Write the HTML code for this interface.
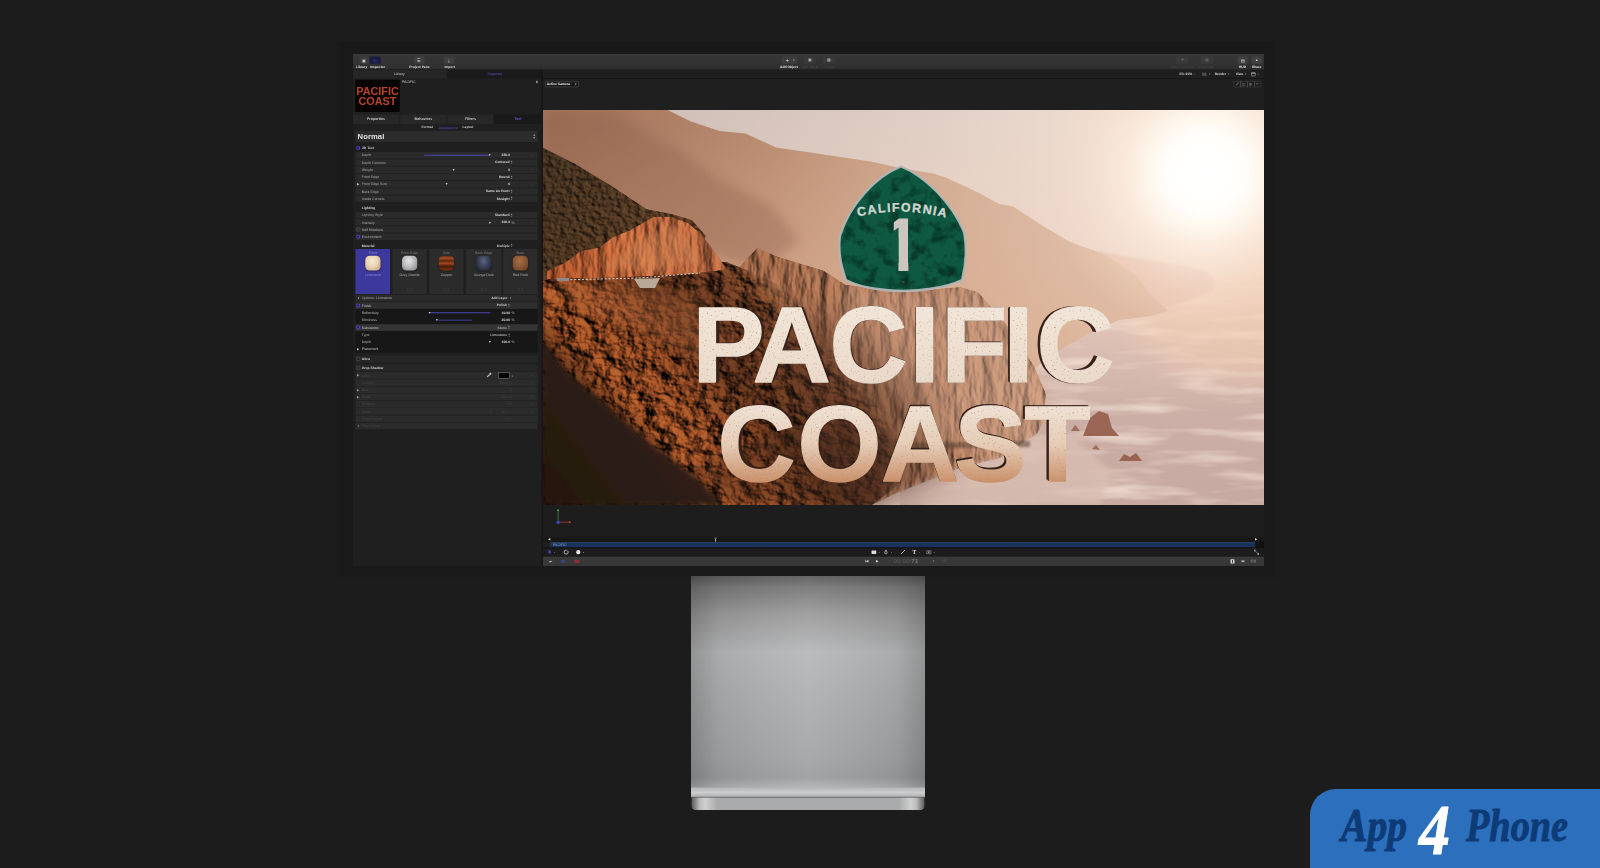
<!DOCTYPE html>
<html lang="en">
<head>
<meta charset="utf-8">
<title>Motion on Pro Display XDR - App 4 Phone</title>
<style>
html,body{margin:0;padding:0;}
body{width:1600px;height:868px;overflow:hidden;background:#1c1c1c;position:relative;font-family:"Liberation Sans",sans-serif;color:#d8d8d8;}
.a{position:absolute;}
#bezelshadow{left:336px;top:41px;width:944px;height:537px;background:#1b1b1b;border-radius:3px;}
#bezel{left:340px;top:42px;width:934px;height:534px;background:#191919;border-radius:3px;}
#screen{left:352.5px;top:53.5px;width:911px;height:512.5px;background:#1f1f1f;overflow:hidden;}
/* screen children are positioned in page coordinates via this wrapper */
#sc{left:-352.5px;top:-53.5px;width:1600px;height:868px;}
#toolbar{left:352px;top:53px;width:912px;height:16.6px;background:#313131;}
#stand{left:691px;top:576px;width:234px;height:234.5px;}
#badge{left:1310px;top:789px;width:290px;height:79px;background:#2b6fbd;border-top-left-radius:26px;}
#badge span{position:absolute;white-space:nowrap;font-family:"Liberation Serif",serif;font-style:italic;font-weight:bold;}
.t[style*="font-weight:bold"]{font-size:13.4px}
.t{font-size:14px;line-height:28.8px;white-space:nowrap;color:#bdbdbd;text-rendering:geometricPrecision;}
.thumb{font-size:43.6px;line-height:44px;font-weight:bold;color:#b9422b;text-align:center;letter-spacing:-0.2px;}
.mat{border-radius:17px;box-shadow:0 3px 6px rgba(0,0,0,0.55);}
.lim{background:radial-gradient(ellipse at 45% 35%,#f6ead2 0%,#ead5b4 45%,#c9a982 85%,#a98a66 100%);}
.gra{background:radial-gradient(ellipse at 45% 35%,#e6e6e8 0%,#bdbdc0 45%,#8c8c90 85%,#66666a 100%);}
.cop{background:linear-gradient(180deg,#6a2c14 0%,#a24c22 18%,#5e2410 34%,#9a4820 52%,#4c1c0c 72%,#7a3416 100%);}
.gru{background:radial-gradient(ellipse at 50% 35%,#5a6482 0%,#3a4258 45%,#20242e 90%);}
.red{background:radial-gradient(ellipse at 45% 35%,#a87048 0%,#8a5634 50%,#5e3820 100%);}
</style>
</head>
<body>
<div class="a" id="bezelshadow"></div>
<div class="a" id="bezel"></div>
<div class="a" id="screen"><div class="a" id="sc">
<div class="a" id="toolbar"></div>
<!--PANEL-START-->
<div class="a" style="left:0;top:0;width:6400px;height:3472px;transform:scale(0.25);transform-origin:0 0">
<div class="a" style="left:1410.00px;top:278.40px;width:756.00px;height:1988.00px;background:#1f1f1f;"></div>
<div class="a" style="left:1410.00px;top:278.40px;width:378.00px;height:35.60px;background:#262626;"></div>
<div class="a" style="left:1788.00px;top:278.40px;width:378.00px;height:35.60px;background:#1a1a1a;"></div>
<div class="a t" style="left:1576.00px;top:282.40px;color:#c8c8c8">Library</div>
<div class="a t" style="left:1950.00px;top:282.40px;color:#5f5bd8">Inspector</div>
<div class="a" style="left:1421.20px;top:319.20px;width:177.60px;height:129.20px;background:#050303;overflow:hidden"><div class="a thumb" style="left:0;top:22.80px;width:177.60px;">PACIFIC</div><div class="a thumb" style="left:0;top:64.40px;width:177.60px;">COAST</div></div>
<div class="a t" style="left:1608.00px;top:313.60px;color:#cfcfcf">PACIFIC</div>
<div class="a" style="left:2145.20px;top:323.20px;width:4.80px;height:9.60px;background:#b0b0b0;border-radius:1.60px"></div>
<div class="a" style="left:1410.00px;top:458.40px;width:185.20px;height:38.00px;background:#272727;"></div>
<div class="a t" style="left:1410.00px;width:188.00px;top:462.80px;text-align:center;color:#c4c4c4;font-weight:bold;font-size:14.68px">Properties</div>
<div class="a" style="left:1600.80px;top:458.40px;width:183.20px;height:38.00px;background:#272727;"></div>
<div class="a t" style="left:1600.80px;width:186.00px;top:462.80px;text-align:center;color:#c4c4c4;font-weight:bold;font-size:14.68px">Behaviors</div>
<div class="a" style="left:1788.80px;top:458.40px;width:183.20px;height:38.00px;background:#272727;"></div>
<div class="a t" style="left:1788.80px;width:186.00px;top:462.80px;text-align:center;color:#c4c4c4;font-weight:bold;font-size:14.68px">Filters</div>
<div class="a" style="left:1976.80px;top:458.40px;width:186.40px;height:38.00px;background:#191919;"></div>
<div class="a t" style="left:1976.80px;width:189.20px;top:462.80px;text-align:center;color:#5a56cf;font-weight:bold;font-size:14.68px">Text</div>
<div class="a t" style="left:1686.00px;top:494.80px;color:#c8c8c8;font-weight:bold">Format</div>
<div class="a t" style="left:1755.20px;top:494.80px;color:#4f4bc0">Appearance</div>
<div class="a t" style="left:1850.00px;top:494.80px;color:#c8c8c8;font-weight:bold">Layout</div>
<div class="a" style="left:1422.00px;top:524.00px;width:728.00px;height:44.00px;background:#2c2c2c;border-radius:3.20px"></div>
<div class="a" style="left:1430.40px;top:526.40px;font-size:30.40px;line-height:40.00px;font-weight:bold;color:#e4e4e4;letter-spacing:0.40px">Normal</div>
<div class="a" style="left:2130.40px;top:532.00px;font-size:13.60px;line-height:12.80px;color:#9a9a9a">&#9650;<br>&#9660;</div>
<div class="a" style="left:1425.60px;top:584.60px;width:14.00px;height:14.00px;background:#4a45c4;border-radius:3.20px"></div>
<div class="a" style="left:1429.20px;top:588.00px;width:6.80px;height:6.80px;background:#1c1a5a;border-radius:1.20px"></div>
<div class="a t" style="left:1448.00px;top:577.20px;color:#d4d4d4;font-weight:bold">3D Text</div>
<div class="a" style="left:1422.00px;top:607.80px;width:728.00px;height:26.00px;background:#2a2a2a;"></div>
<div class="a t" style="left:1447.20px;top:606.40px;color:#a9a9a9">Depth</div>
<div class="a" style="left:1422.00px;top:636.80px;width:728.00px;height:26.00px;background:#2a2a2a;"></div>
<div class="a t" style="left:1447.20px;top:635.40px;color:#a9a9a9">Depth Direction</div>
<div class="a" style="left:1422.00px;top:665.80px;width:728.00px;height:26.00px;background:#2a2a2a;"></div>
<div class="a t" style="left:1447.20px;top:664.40px;color:#a9a9a9">Weight</div>
<div class="a" style="left:1422.00px;top:694.80px;width:728.00px;height:26.00px;background:#2a2a2a;"></div>
<div class="a t" style="left:1447.20px;top:693.40px;color:#a9a9a9">Front Edge</div>
<div class="a" style="left:1422.00px;top:723.80px;width:728.00px;height:26.00px;background:#2a2a2a;"></div>
<div class="a t" style="left:1447.20px;top:722.40px;color:#a9a9a9">Front Edge Size</div>
<div class="a" style="left:1422.00px;top:752.60px;width:728.00px;height:26.00px;background:#2a2a2a;"></div>
<div class="a t" style="left:1447.20px;top:751.20px;color:#a9a9a9">Back Edge</div>
<div class="a" style="left:1422.00px;top:781.60px;width:728.00px;height:26.00px;background:#2a2a2a;"></div>
<div class="a t" style="left:1447.20px;top:780.20px;color:#a9a9a9">Inside Corners</div>
<div class="a" style="left:1696.00px;top:619.00px;width:261.60px;height:3.60px;background:#4b47b8;border-radius:1.60px"></div>
<div class="a" style="left:1952.40px;top:613.20px;font-size:13.20px;line-height:16.00px;color:#c9c9c9">&#9660;</div>
<div class="a t" style="right:4360.00px;top:606.40px;text-align:right;color:#e2e2e2;font-weight:bold">330.0</div>
<div class="a" style="left:2126.00px;top:619.20px;width:6.40px;height:3.20px;background:#3c3c3c;"></div>
<div class="a t" style="right:4362.00px;top:635.40px;text-align:right;color:#dcdcdc;font-weight:bold">Centered</div>
<div class="a" style="left:2041.60px;top:641.60px;font-size:9.60px;line-height:8.00px;color:#9c9c9c">&#9650;<br>&#9660;</div>
<div class="a" style="left:1808.40px;top:671.20px;font-size:13.20px;line-height:16.00px;color:#c9c9c9">&#9660;</div>
<div class="a t" style="right:4360.00px;top:664.40px;text-align:right;color:#e2e2e2;font-weight:bold">0</div>
<div class="a" style="left:2126.00px;top:677.20px;width:6.40px;height:3.20px;background:#3c3c3c;"></div>
<div class="a t" style="right:4362.00px;top:693.40px;text-align:right;color:#dcdcdc;font-weight:bold">Round</div>
<div class="a" style="left:2041.60px;top:699.60px;font-size:9.60px;line-height:8.00px;color:#9c9c9c">&#9650;<br>&#9660;</div>
<div class="a" style="left:1429.20px;top:728.80px;font-size:10.40px;line-height:16.00px;color:#c0c0c0">&#9654;</div>
<div class="a" style="left:1779.60px;top:729.20px;font-size:13.20px;line-height:16.00px;color:#c9c9c9">&#9660;</div>
<div class="a t" style="right:4360.00px;top:722.40px;text-align:right;color:#e2e2e2;font-weight:bold">6</div>
<div class="a" style="left:2126.00px;top:735.20px;width:6.40px;height:3.20px;background:#3c3c3c;"></div>
<div class="a t" style="right:4362.00px;top:751.20px;text-align:right;color:#dcdcdc;font-weight:bold">Same As Front</div>
<div class="a" style="left:2041.60px;top:757.40px;font-size:9.60px;line-height:8.00px;color:#9c9c9c">&#9650;<br>&#9660;</div>
<div class="a t" style="right:4362.00px;top:780.20px;text-align:right;color:#dcdcdc;font-weight:bold">Straight</div>
<div class="a" style="left:2041.60px;top:786.40px;font-size:9.60px;line-height:8.00px;color:#9c9c9c">&#9650;<br>&#9660;</div>
<div class="a t" style="left:1447.20px;top:816.80px;color:#dadada;font-weight:bold">Lighting</div>
<div class="a" style="left:1422.00px;top:846.60px;width:728.00px;height:26.00px;background:#2a2a2a;"></div>
<div class="a t" style="left:1447.20px;top:845.20px;color:#a9a9a9">Lighting Style</div>
<div class="a" style="left:1422.00px;top:876.20px;width:728.00px;height:26.00px;background:#2a2a2a;"></div>
<div class="a t" style="left:1447.20px;top:874.80px;color:#a9a9a9">Intensity</div>
<div class="a t" style="right:4362.00px;top:845.20px;text-align:right;color:#dcdcdc;font-weight:bold">Standard</div>
<div class="a" style="left:2041.60px;top:851.40px;font-size:9.60px;line-height:8.00px;color:#9c9c9c">&#9650;<br>&#9660;</div>
<div class="a" style="left:1953.20px;top:881.60px;font-size:13.20px;line-height:16.00px;color:#c9c9c9">&#9660;</div>
<div class="a t" style="right:4360.00px;top:874.80px;text-align:right;color:#e2e2e2;font-weight:bold">100.0</div>
<div class="a t" style="left:2046.40px;top:874.80px;color:#bcbcbc">%</div>
<div class="a" style="left:2126.00px;top:887.60px;width:6.40px;height:3.20px;background:#3c3c3c;"></div>
<div class="a" style="left:1422.00px;top:905.00px;width:728.00px;height:26.00px;background:#2a2a2a;"></div>
<div class="a" style="left:1425.60px;top:911.00px;width:12.40px;height:12.40px;background:transparent;border:1.40px solid #8a8a8a;border-radius:2.80px"></div>
<div class="a t" style="left:1447.20px;top:903.60px;color:#b4b4b4">Self Shadows</div>
<div class="a" style="left:1422.00px;top:933.80px;width:728.00px;height:26.00px;background:#2a2a2a;"></div>
<div class="a" style="left:1425.60px;top:939.80px;width:14.00px;height:14.00px;background:#4a45c4;border-radius:3.20px"></div>
<div class="a" style="left:1429.20px;top:943.20px;width:6.80px;height:6.80px;background:#1c1a5a;border-radius:1.20px"></div>
<div class="a t" style="left:1447.20px;top:932.40px;color:#b4b4b4">Environment</div>
<div class="a t" style="left:1447.20px;top:968.00px;color:#dadada;font-weight:bold">Material</div>
<div class="a t" style="right:4362.00px;top:968.00px;text-align:right;color:#c8c8c8;font-weight:bold">Multiple</div>
<div class="a" style="left:2041.60px;top:974.20px;font-size:9.60px;line-height:8.00px;color:#9c9c9c">&#9650;<br>&#9660;</div>
<div class="a" style="left:1422.40px;top:996.00px;width:137.60px;height:180.00px;background:#3c389c;"></div>
<div class="a t" style="left:1422.40px;width:137.60px;top:995.20px;text-align:center;color:#8d8ad8">Front</div>
<div class="a mat lim" style="left:1460.80px;top:1023.20px;width:60.80px;height:59.20px"></div>
<div class="a t" style="left:1422.40px;width:137.60px;top:1085.20px;text-align:center;color:#8d8ad8">Limestone</div>
<div class="a" style="left:1569.60px;top:996.00px;width:137.60px;height:180.00px;background:#2b2b2b;"></div>
<div class="a t" style="left:1569.60px;width:137.60px;top:995.20px;text-align:center;color:#7c7c7c">Front Edge</div>
<div class="a mat gra" style="left:1608.00px;top:1023.20px;width:60.80px;height:59.20px"></div>
<div class="a t" style="left:1569.60px;width:137.60px;top:1085.20px;text-align:center;color:#b0b0b0">Grey Granite</div>
<div class="a" style="left:1628.00px;top:1154.40px;width:6.40px;height:7.20px;background:#383838;"></div>
<div class="a" style="left:1642.40px;top:1154.40px;width:6.40px;height:7.20px;background:#383838;"></div>
<div class="a" style="left:1716.80px;top:996.00px;width:137.60px;height:180.00px;background:#2b2b2b;"></div>
<div class="a t" style="left:1716.80px;width:137.60px;top:995.20px;text-align:center;color:#7c7c7c">Side</div>
<div class="a mat cop" style="left:1755.20px;top:1023.20px;width:60.80px;height:59.20px"></div>
<div class="a t" style="left:1716.80px;width:137.60px;top:1085.20px;text-align:center;color:#b0b0b0">Copper</div>
<div class="a" style="left:1775.20px;top:1154.40px;width:6.40px;height:7.20px;background:#383838;"></div>
<div class="a" style="left:1789.60px;top:1154.40px;width:6.40px;height:7.20px;background:#383838;"></div>
<div class="a" style="left:1864.00px;top:996.00px;width:141.60px;height:180.00px;background:#2b2b2b;"></div>
<div class="a t" style="left:1864.00px;width:141.60px;top:995.20px;text-align:center;color:#7c7c7c">Back Edge</div>
<div class="a mat gru" style="left:1904.40px;top:1023.20px;width:60.80px;height:59.20px"></div>
<div class="a t" style="left:1864.00px;width:141.60px;top:1085.20px;text-align:center;color:#b0b0b0">Grunge Dark</div>
<div class="a" style="left:1924.40px;top:1154.40px;width:6.40px;height:7.20px;background:#383838;"></div>
<div class="a" style="left:1938.80px;top:1154.40px;width:6.40px;height:7.20px;background:#383838;"></div>
<div class="a" style="left:2013.20px;top:996.00px;width:137.20px;height:180.00px;background:#2b2b2b;"></div>
<div class="a t" style="left:2013.20px;width:137.20px;top:995.20px;text-align:center;color:#7c7c7c">Back</div>
<div class="a mat red" style="left:2051.40px;top:1023.20px;width:60.80px;height:59.20px"></div>
<div class="a t" style="left:2013.20px;width:137.20px;top:1085.20px;text-align:center;color:#b0b0b0">Red Rock</div>
<div class="a" style="left:2071.40px;top:1154.40px;width:6.40px;height:7.20px;background:#383838;"></div>
<div class="a" style="left:2085.80px;top:1154.40px;width:6.40px;height:7.20px;background:#383838;"></div>
<div class="a" style="left:1422.00px;top:1179.00px;width:728.00px;height:26.00px;background:#2a2a2a;"></div>
<div class="a" style="left:1428.80px;top:1184.00px;font-size:10.40px;line-height:16.00px;color:#c0c0c0">&#9660;</div>
<div class="a t" style="left:1447.20px;top:1177.60px;color:#a9a9a9">Options: Limestone</div>
<div class="a t" style="right:4370.00px;top:1177.60px;text-align:right;color:#cfcfcf;font-weight:bold">Add Layer</div>
<div class="a" style="left:2036.80px;top:1186.40px;font-size:10.40px;line-height:12.00px;color:#9c9c9c">&#9660;</div>
<div class="a" style="left:1422.00px;top:1208.60px;width:728.00px;height:26.00px;background:#2f2f2f;"></div>
<div class="a" style="left:1425.60px;top:1214.60px;width:14.00px;height:14.00px;background:#4a45c4;border-radius:3.20px"></div>
<div class="a" style="left:1429.20px;top:1218.00px;width:6.80px;height:6.80px;background:#1c1a5a;border-radius:1.20px"></div>
<div class="a t" style="left:1447.20px;top:1207.20px;color:#c4c4c4">Finish</div>
<div class="a t" style="right:4372.80px;top:1207.20px;text-align:right;color:#c8c8c8;font-weight:bold">Polish</div>
<div class="a" style="left:2030.80px;top:1213.40px;font-size:9.60px;line-height:8.00px;color:#9c9c9c">&#9650;<br>&#9660;</div>
<div class="a" style="left:1422.00px;top:1236.40px;width:728.00px;height:58.40px;background:#171717;"></div>
<div class="a t" style="left:1447.20px;top:1236.80px;color:#b8b8b8">Reflectivity</div>
<div class="a" style="left:1720.00px;top:1249.40px;width:242.00px;height:3.60px;background:#4b47b8;border-radius:1.60px"></div>
<div class="a" style="left:1712.40px;top:1243.60px;font-size:13.20px;line-height:16.00px;color:#c9c9c9">&#9660;</div>
<div class="a t" style="right:4360.00px;top:1236.80px;text-align:right;color:#e2e2e2;font-weight:bold">10.00</div>
<div class="a t" style="left:2046.40px;top:1236.80px;color:#bcbcbc">%</div>
<div class="a t" style="left:1447.20px;top:1266.00px;color:#b8b8b8">Shininess</div>
<div class="a" style="left:1750.00px;top:1278.60px;width:139.20px;height:3.60px;background:#4b47b8;border-radius:1.60px"></div>
<div class="a" style="left:1741.20px;top:1272.80px;font-size:13.20px;line-height:16.00px;color:#c9c9c9">&#9660;</div>
<div class="a t" style="right:4360.00px;top:1266.00px;text-align:right;color:#e2e2e2;font-weight:bold">30.00</div>
<div class="a t" style="left:2046.40px;top:1266.00px;color:#bcbcbc">%</div>
<div class="a" style="left:1422.00px;top:1297.00px;width:728.00px;height:26.00px;background:#343434;"></div>
<div class="a" style="left:1425.60px;top:1303.00px;width:14.00px;height:14.00px;background:#4a45c4;border-radius:3.20px"></div>
<div class="a" style="left:1429.20px;top:1306.40px;width:6.80px;height:6.80px;background:#1c1a5a;border-radius:1.20px"></div>
<div class="a t" style="left:1447.20px;top:1295.60px;color:#c4c4c4">Substance</div>
<div class="a t" style="right:4372.80px;top:1295.60px;text-align:right;color:#a8a8a8;font-weight:bold">Stone</div>
<div class="a" style="left:2030.80px;top:1301.80px;font-size:9.60px;line-height:8.00px;color:#9c9c9c">&#9650;<br>&#9660;</div>
<div class="a" style="left:1422.00px;top:1324.80px;width:728.00px;height:85.60px;background:#171717;"></div>
<div class="a t" style="left:1447.20px;top:1325.20px;color:#b8b8b8">Type</div>
<div class="a t" style="right:4372.00px;top:1325.20px;text-align:right;color:#b4b4b4;font-weight:bold">Limestone</div>
<div class="a" style="left:2031.60px;top:1331.40px;font-size:9.60px;line-height:8.00px;color:#9c9c9c">&#9650;<br>&#9660;</div>
<div class="a t" style="left:1447.20px;top:1354.40px;color:#b8b8b8">Depth</div>
<div class="a" style="left:1953.20px;top:1361.20px;font-size:13.20px;line-height:16.00px;color:#c9c9c9">&#9660;</div>
<div class="a t" style="right:4360.00px;top:1354.40px;text-align:right;color:#e2e2e2;font-weight:bold">100.0</div>
<div class="a t" style="left:2046.40px;top:1354.40px;color:#bcbcbc">%</div>
<div class="a" style="left:1429.20px;top:1388.40px;font-size:10.40px;line-height:16.00px;color:#c0c0c0">&#9654;</div>
<div class="a t" style="left:1447.20px;top:1382.00px;color:#c4c4c4">Placement</div>
<div class="a" style="left:1422.00px;top:1421.60px;width:728.00px;height:28.80px;background:#262626;"></div>
<div class="a" style="left:1425.60px;top:1428.20px;width:12.40px;height:12.40px;background:transparent;border:1.40px solid #8a8a8a;border-radius:2.80px"></div>
<div class="a t" style="left:1447.20px;top:1420.80px;color:#d0d0d0;font-weight:bold">Glow</div>
<div class="a" style="left:1422.00px;top:1457.20px;width:728.00px;height:28.80px;background:#262626;"></div>
<div class="a" style="left:1425.60px;top:1464.20px;width:12.40px;height:12.40px;background:transparent;border:1.40px solid #8a8a8a;border-radius:2.80px"></div>
<div class="a t" style="left:1447.20px;top:1456.80px;color:#d0d0d0;font-weight:bold">Drop Shadow</div>
<div class="a" style="left:1422.00px;top:1488.40px;width:728.00px;height:26.40px;background:#2b2b2b;"></div>
<div class="a" style="left:1429.20px;top:1493.60px;font-size:10.40px;line-height:16.00px;color:#9a9a9a">&#9654;</div>
<div class="a t" style="left:1447.20px;top:1487.20px;color:#474747">Color</div>
<div class="a" style="left:2126.00px;top:1500.00px;width:6.40px;height:3.20px;background:#3c3c3c;"></div>
<div class="a" style="left:1422.00px;top:1517.20px;width:728.00px;height:26.40px;background:#2b2b2b;"></div>
<div class="a t" style="left:1447.20px;top:1516.00px;color:#474747">Opacity</div>
<div class="a" style="left:2126.00px;top:1528.80px;width:6.40px;height:3.20px;background:#3c3c3c;"></div>
<div class="a" style="left:1422.00px;top:1545.60px;width:728.00px;height:26.40px;background:#2b2b2b;"></div>
<div class="a" style="left:1429.20px;top:1550.80px;font-size:10.40px;line-height:16.00px;color:#9a9a9a">&#9654;</div>
<div class="a t" style="left:1447.20px;top:1544.40px;color:#474747">Blur</div>
<div class="a" style="left:2126.00px;top:1557.20px;width:6.40px;height:3.20px;background:#3c3c3c;"></div>
<div class="a" style="left:1422.00px;top:1574.40px;width:728.00px;height:26.40px;background:#2b2b2b;"></div>
<div class="a" style="left:1429.20px;top:1579.60px;font-size:10.40px;line-height:16.00px;color:#9a9a9a">&#9654;</div>
<div class="a t" style="left:1447.20px;top:1573.20px;color:#474747">Scale</div>
<div class="a" style="left:2126.00px;top:1586.00px;width:6.40px;height:3.20px;background:#3c3c3c;"></div>
<div class="a" style="left:1422.00px;top:1603.20px;width:728.00px;height:26.40px;background:#2b2b2b;"></div>
<div class="a t" style="left:1447.20px;top:1602.00px;color:#474747">Distance</div>
<div class="a" style="left:2126.00px;top:1614.80px;width:6.40px;height:3.20px;background:#3c3c3c;"></div>
<div class="a" style="left:1422.00px;top:1632.40px;width:728.00px;height:26.40px;background:#2b2b2b;"></div>
<div class="a t" style="left:1447.20px;top:1631.20px;color:#474747">Angle</div>
<div class="a" style="left:2126.00px;top:1644.00px;width:6.40px;height:3.20px;background:#3c3c3c;"></div>
<div class="a" style="left:1422.00px;top:1661.60px;width:728.00px;height:26.40px;background:#2b2b2b;"></div>
<div class="a t" style="left:1447.20px;top:1660.40px;color:#474747">Fixed Source</div>
<div class="a" style="left:1422.00px;top:1690.80px;width:728.00px;height:26.40px;background:#2b2b2b;"></div>
<div class="a" style="left:1428.80px;top:1696.00px;font-size:10.40px;line-height:16.00px;color:#9a9a9a">&#9660;</div>
<div class="a t" style="left:1447.20px;top:1689.60px;color:#474747">Four Corner</div>
<div class="a t" style="right:4352.00px;top:1516.00px;text-align:right;color:#444">100.0 %</div>
<div class="a t" style="right:4352.00px;top:1544.40px;text-align:right;color:#444">0</div>
<div class="a t" style="right:4352.00px;top:1573.20px;text-align:right;color:#444">100 %</div>
<div class="a t" style="right:4352.00px;top:1602.00px;text-align:right;color:#444">5.0</div>
<div class="a t" style="right:4352.00px;top:1631.20px;text-align:right;color:#444">315.0 &deg;</div>
<div class="a" style="left:1992.40px;top:1489.20px;width:46.40px;height:24.80px;background:#050505;border:2.00px solid #9a9a9a;box-sizing:border-box"></div>
<div class="a" style="left:2044.00px;top:1496.80px;font-size:9.60px;line-height:12.00px;color:#aaa">&#9660;</div>
<svg class="a" style="left:1945.20px;top:1490.40px" width="21.60" height="21.60" viewBox="0 0 10 10"><path d="M1 9 L1.6 7 L6 2.6 L7.4 4 L3 8.4 Z" fill="#c8c8c8"/><path d="M5.6 1.8 L7 0.6 Q8.4 0 9.2 0.8 Q10 1.6 9.4 3 L8.2 4.4 Z" fill="#e0e0e0"/></svg>
<div class="a" style="left:1955.60px;top:1639.20px;width:12.80px;height:12.80px;background:transparent;border:1.60px solid #5a5a5a;border-radius:50%;box-sizing:border-box"></div>
<div class="a" style="left:2028.00px;top:1668.80px;width:11.20px;height:11.20px;background:transparent;border:1.40px solid #444;border-radius:2.40px;box-sizing:border-box"></div>
<div class="a" style="left:2165.60px;top:278.40px;width:6.40px;height:1988.00px;background:#161616;"></div>
</div>
<!--PANEL-END-->
<!--CANVAS-START-->
<svg class="a" style="left:543px;top:110px" width="720.5" height="395" viewBox="543 110 720.5 395">
<defs>
<linearGradient id="sky" x1="543" y1="0" x2="1263" y2="0" gradientUnits="userSpaceOnUse">
<stop offset="0" stop-color="#c9b8b1"/>
<stop offset="0.25" stop-color="#d2c3bc"/>
<stop offset="0.55" stop-color="#dfd0c7"/>
<stop offset="0.8" stop-color="#ecdcd1"/>
<stop offset="1" stop-color="#efd9cf"/>
</linearGradient>
<linearGradient id="skyv" x1="0" y1="110" x2="0" y2="330" gradientUnits="userSpaceOnUse">
<stop offset="0" stop-color="#f0d2bf" stop-opacity="0"/>
<stop offset="1" stop-color="#efd0be" stop-opacity="0.7"/>
</linearGradient>
<radialGradient id="sun" cx="1205" cy="173" r="160" gradientUnits="userSpaceOnUse">
<stop offset="0" stop-color="#ffffff" stop-opacity="1"/>
<stop offset="0.24" stop-color="#fffefb" stop-opacity="1"/>
<stop offset="0.36" stop-color="#fff8ee" stop-opacity="0.92"/>
<stop offset="0.52" stop-color="#fdeee0" stop-opacity="0.66"/>
<stop offset="0.75" stop-color="#f9e4d4" stop-opacity="0.28"/>
<stop offset="1" stop-color="#f6dccb" stop-opacity="0"/>
</radialGradient>
<radialGradient id="haze" cx="1206" cy="172" r="620" gradientUnits="userSpaceOnUse">
<stop offset="0" stop-color="#ffeee0" stop-opacity="0.4"/>
<stop offset="0.35" stop-color="#f2d8c8" stop-opacity="0.17"/>
<stop offset="0.7" stop-color="#e6bca4" stop-opacity="0.05"/>
<stop offset="1" stop-color="#e0a888" stop-opacity="0"/>
</radialGradient>
<linearGradient id="sea" x1="0" y1="280" x2="0" y2="505" gradientUnits="userSpaceOnUse">
<stop offset="0" stop-color="#ebcfbf"/>
<stop offset="0.25" stop-color="#d8bbaf"/>
<stop offset="0.6" stop-color="#c5a8a1"/>
<stop offset="1" stop-color="#c2a6a0"/>
</linearGradient>
<linearGradient id="farmt" x1="560" y1="110" x2="1160" y2="300" gradientUnits="userSpaceOnUse">
<stop offset="0" stop-color="#a3735b"/>
<stop offset="0.3" stop-color="#b5876c"/>
<stop offset="0.6" stop-color="#cda68c"/>
<stop offset="1" stop-color="#e0bca6"/>
</linearGradient>
<linearGradient id="farmtv" x1="0" y1="130" x2="0" y2="300" gradientUnits="userSpaceOnUse">
<stop offset="0" stop-color="#d6aa8c" stop-opacity="0"/>
<stop offset="1" stop-color="#d6aa8c" stop-opacity="0.6"/>
</linearGradient>
<linearGradient id="mid" x1="740" y1="250" x2="1040" y2="440" gradientUnits="userSpaceOnUse">
<stop offset="0" stop-color="#a06a4c"/>
<stop offset="0.45" stop-color="#a57458"/>
<stop offset="1" stop-color="#b58a70"/>
</linearGradient>
<linearGradient id="near" x1="590" y1="480" x2="800" y2="290" gradientUnits="userSpaceOnUse">
<stop offset="0" stop-color="#2c1b11"/>
<stop offset="0.16" stop-color="#4a2a18"/>
<stop offset="0.3" stop-color="#a05a30"/>
<stop offset="0.46" stop-color="#94522c"/>
<stop offset="0.62" stop-color="#5c341e"/>
<stop offset="0.82" stop-color="#6a3e26"/>
<stop offset="1" stop-color="#8a5a3c"/>
</linearGradient>
<linearGradient id="veg" x1="543" y1="150" x2="700" y2="280" gradientUnits="userSpaceOnUse">
<stop offset="0" stop-color="#4b3a28"/>
<stop offset="0.55" stop-color="#58402a"/>
<stop offset="1" stop-color="#6e452a"/>
</linearGradient>
<linearGradient id="cut" x1="560" y1="280" x2="690" y2="215" gradientUnits="userSpaceOnUse">
<stop offset="0" stop-color="#ad5a32"/>
<stop offset="0.55" stop-color="#c37044"/>
<stop offset="1" stop-color="#b86c46"/>
</linearGradient>
<linearGradient id="shadow" x1="543" y1="505" x2="690" y2="390" gradientUnits="userSpaceOnUse">
<stop offset="0" stop-color="#24180f"/>
<stop offset="0.7" stop-color="#2e1e14"/>
<stop offset="1" stop-color="#4a2c1a"/>
</linearGradient>
<linearGradient id="txt1" x1="0" y1="306" x2="0" y2="382" gradientUnits="userSpaceOnUse">
<stop offset="0" stop-color="#f1e6da"/>
<stop offset="1" stop-color="#eadaca"/>
</linearGradient>
<linearGradient id="txt2" x1="0" y1="405" x2="0" y2="483" gradientUnits="userSpaceOnUse">
<stop offset="0" stop-color="#efe2d4"/>
<stop offset="0.5" stop-color="#e6cdb8"/>
<stop offset="1" stop-color="#c9906a"/>
</linearGradient>
<filter id="rockf" color-interpolation-filters="sRGB" x="0" y="0" width="100%" height="100%">
<feTurbulence type="fractalNoise" baseFrequency="0.16 0.2" numOctaves="3" seed="9" result="n"/>
<feDiffuseLighting in="n" surfaceScale="2.2" diffuseConstant="1.1" lighting-color="#fff0e0" result="lit"><feDistantLight azimuth="-30" elevation="48"/></feDiffuseLighting>
<feComposite in="lit" in2="SourceGraphic" operator="arithmetic" k1="1.1" k2="0" k3="0" k4="0" result="mul"/>
<feComposite in="mul" in2="SourceGraphic" operator="in"/>
</filter>
<filter id="rock2" color-interpolation-filters="sRGB" x="0" y="0" width="100%" height="100%">
<feTurbulence type="fractalNoise" baseFrequency="0.085 0.028" numOctaves="4" seed="4" result="n"/>
<feDiffuseLighting in="n" surfaceScale="3.2" diffuseConstant="1.12" lighting-color="#fff0e2" result="lit"><feDistantLight azimuth="-10" elevation="50"/></feDiffuseLighting>
<feComposite in="lit" in2="SourceGraphic" operator="arithmetic" k1="1.12" k2="0" k3="0" k4="0" result="mul"/>
<feComposite in="mul" in2="SourceGraphic" operator="in"/>
</filter>
<filter id="rock" color-interpolation-filters="sRGB" x="0" y="0" width="100%" height="100%">
<feTurbulence type="fractalNoise" baseFrequency="0.06 0.085" numOctaves="5" seed="7" result="n"/>
<feDiffuseLighting in="n" surfaceScale="5.5" diffuseConstant="1.22" lighting-color="#ffe2c6" result="lit"><feDistantLight azimuth="-25" elevation="38"/></feDiffuseLighting>
<feComposite in="lit" in2="SourceGraphic" operator="arithmetic" k1="1.15" k2="0" k3="0" k4="0" result="mul"/>
<feComposite in="mul" in2="SourceGraphic" operator="in"/>
</filter>
<filter id="speck" color-interpolation-filters="sRGB" x="0" y="0" width="100%" height="100%">
<feTurbulence type="fractalNoise" baseFrequency="0.55" numOctaves="2" seed="3" result="n"/>
<feColorMatrix in="n" type="matrix" values="0 0 0 0 0.72  0 0 0 0 0.5  0 0 0 0 0.38  3.0 0 0 0 -1.95" result="sp"/>
<feComposite in="sp" in2="SourceGraphic" operator="in" result="spc"/>
<feMerge><feMergeNode in="SourceGraphic"/><feMergeNode in="spc"/></feMerge>
</filter>
<filter id="mottle" color-interpolation-filters="sRGB" x="-5%" y="-5%" width="110%" height="110%">
<feTurbulence type="fractalNoise" baseFrequency="0.09" numOctaves="3" seed="5" result="n"/>
<feColorMatrix in="n" type="matrix" values="0 0 0 0 0.02  0 0 0 0 0.18  0 0 0 0 0.13  2.4 0 0 0 -1.1" result="sp"/>
<feComposite in="sp" in2="SourceGraphic" operator="in" result="spc"/>
<feMerge><feMergeNode in="SourceGraphic"/><feMergeNode in="spc"/></feMerge>
</filter>
<filter id="waves" color-interpolation-filters="sRGB" x="0" y="0" width="100%" height="100%">
<feTurbulence type="fractalNoise" baseFrequency="0.012 0.07" numOctaves="3" seed="11" result="n"/>
<feColorMatrix in="n" type="matrix" values="0 0 0 0 1  0 0 0 0 0.93  0 0 0 0 0.89  1.7 0 0 0 -0.8" result="w"/>
<feComposite in="w" in2="SourceGraphic" operator="in" result="wc"/>
<feMerge><feMergeNode in="SourceGraphic"/><feMergeNode in="wc"/></feMerge>
</filter>
<filter id="b1"><feGaussianBlur stdDeviation="1"/></filter>
<filter id="b2"><feGaussianBlur stdDeviation="2.5"/></filter>
<filter id="b6"><feGaussianBlur stdDeviation="6"/></filter>
<filter id="b14"><feGaussianBlur stdDeviation="14"/></filter>
<clipPath id="oneclip"><path d="M893.8 217 H908.4 V272 H898.4 V238 H893.8 Z"/></clipPath>
<filter id="b9" x="-20%" y="-20%" width="140%" height="140%"><feGaussianBlur stdDeviation="9"/></filter>
<mask id="nearmask" maskUnits="userSpaceOnUse" x="543" y="110" width="721" height="395"><path d="M480 230 L600 240 L727 256 L742 266 L772 292 L815 335 L865 395 L895 445 L895 482 L860 560 L480 560 Z" fill="#fff" filter="url(#b9)"/><path d="M480 262 L727 262 L742 268 L760 285 L700 330 L480 330 Z" fill="#fff"/></mask>
<path id="arc" d="M853 218 Q902 204.4 952 219.6"/>
</defs>
<!-- sky -->
<rect x="543" y="110" width="721" height="395" fill="url(#sky)"/>
<rect x="543" y="110" width="721" height="395" fill="url(#skyv)"/>
<!-- sea -->
<rect x="900" y="276" width="364" height="229" fill="url(#sea)" filter="url(#waves)"/>
<ellipse cx="1240" cy="310" rx="110" ry="70" fill="#f2c8a6" opacity="0.45" filter="url(#b14)"/>
<!-- third (farthest) ridge -->
<path d="M1090 250 L1136 258 L1183 265 L1207 272 L1214 279 L1213 291 L1190 300 L1150 312 L1090 320 Z" fill="#e3bda8" filter="url(#b1)"/>
<!-- far mountain -->
<path d="M543 110 L667.6 110 L691 121.5 L719.5 131 L745.5 133.5 L776 147.5 L823.5 154.5 L870.5 161.5 L900 168 L933 173.5 L947 178 L978 192.5 L999 204 L1013 206.5 L1042 225.5 L1070 242 L1103 254 L1136 275 L1150 294 L1168 311 L1150 316 L1119 320 L1092 332 L1066 346 L1046 360 L1030 372 L900 420 L543 420 Z" fill="url(#farmt)"/>
<path d="M543 110 L667.6 110 L691 121.5 L719.5 131 L745.5 133.5 L776 147.5 L823.5 154.5 L870.5 161.5 L900 168 L933 173.5 L947 178 L978 192.5 L999 204 L1013 206.5 L1042 225.5 L1070 242 L1103 254 L1136 275 L1150 294 L1168 311 L1150 316 L1119 320 L1092 332 L1066 346 L1046 360 L1030 372 L900 420 L543 420 Z" fill="url(#farmtv)"/>
<!-- inner crease of far mountain -->
<path d="M543 110 L612 110 L640 128 L680 150 L720 180 L770 205 L800 240 L760 270 L543 200 Z" fill="#8e5e48" opacity="0.4" filter="url(#b6)"/>
<!-- mid headland -->
<g filter="url(#rock2)">
<path d="M728 275 L738.5 268 L757 248 L776 256 L800 263.5 L823.5 270.5 L845 284.5 L900 292 L960 287 L978 292 L1006 324 L1034 366 L1046 394 L1044 420 L1037 434 L1000 458 L960 468 L925 482 L895 494 L872 505 L700 505 Z" fill="url(#mid)"/>
</g>
<path d="M845 284.5 L900 292 L960 287 L978 292 L1006 324 L1034 366 L1046 394 L1044 420 L1037 434 L1000 458 L940 440 L880 380 L840 320 Z" fill="#d3a58c" opacity="0.35" filter="url(#b6)"/>
<!-- surf / beach at foot -->
<path d="M872 505 L895 494 L925 482 L960 468 L1000 458 L1037 434 L1075 440 L1110 470 L1100 505 Z" fill="#d8beb2" opacity="0.75" filter="url(#b2)"/>
<path d="M905 443 L1030 441 L1030 447 L905 449 Z" fill="#4a3228" opacity="0.55" filter="url(#b1)"/>
<!-- sea rocks -->
<path d="M1083 436 L1090 418 L1099 411 L1108 414 L1112 428 L1119 436 Z" fill="#8d5443"/>
<path d="M1119 461 L1124 454 L1130 457 L1136 453 L1142 461 Z" fill="#8d5443"/>
<path d="M1071 431 L1075 425 L1080 431 Z" fill="#94604c"/>
<path d="M1092 449 L1096 445 L1100 450 Z" fill="#94604c"/>
<!-- near cliff base -->
<g mask="url(#nearmask)"><g filter="url(#rock)">
<path d="M543 262 L600 262 L727 262 L742 268 L790 290 L840 330 L890 390 L915 440 L905 480 L872 505 L543 505 Z" fill="url(#near)"/>
</g></g>
<!-- brighter lit band on near cliff -->
<path d="M548 285 L640 282 L700 300 L740 350 L700 360 L640 330 L580 310 Z" fill="#b8683a" opacity="0.4" filter="url(#b6)"/>
<!-- darker area under text -->
<path d="M770 310 L850 320 L930 400 L950 470 L900 505 L840 505 L800 420 Z" fill="#4a2a1a" opacity="0.4" filter="url(#b14)"/>
<path d="M690 468 L780 430 L880 425 L905 470 L880 505 L730 505 Z" fill="#3a2014" opacity="0.38" filter="url(#b6)"/>
<!-- vegetation hill -->
<g filter="url(#rockf)">
<path d="M543 147.5 L575.5 164 L611 185.5 L646.5 209 L672 214 L692 220 L706 236 L700 250 L620 272 L547 280 L543 281 Z" fill="url(#veg)"/>
</g>
<!-- road cut -->
<g filter="url(#rock2)"><path d="M547 271 L566 262 L580.5 251 L599 247.5 L613 237 L630.5 230 L653 217 L672 217 L688 223 L700 233 L709 244 L720 259 L726 268 L724 270 L691 274 L620 277.5 L575 278.5 L547 279.5 Z" fill="url(#cut)"/></g>
<path d="M600 268 L640 240 L668 224 L690 240 L700 262 L650 270 Z" fill="#d28656" opacity="0.4" filter="url(#b2)"/>
<!-- road + bridge -->
<path d="M559 280 L640 278 L700 273" stroke="#e8dcd0" stroke-width="0.9" stroke-dasharray="2.2 1.6" fill="none"/>
<path d="M634 279 L660 278 L655 288 L640 288 Z" fill="#b8a898"/>
<rect x="557" y="278" width="12" height="3" fill="#8a8a90"/>
<!-- bottom-left shadow -->
<path d="M543 340 L569 375 L612 410 L655 447 L698 479 L724 505 L543 505 Z" fill="url(#shadow)" filter="url(#b2)"/>
<!-- global haze -->
<rect x="543" y="110" width="721" height="395" fill="url(#haze)"/>
<!-- sun -->
<rect x="1000" y="110" width="264" height="280" fill="url(#sun)"/>
<!-- SIGN -->
<g>
<path d="M901 166.5 C 925 176 952 203 964 232 C 967 247 966.5 262 962 280 C 945 288 920 291 903 291 C 886 291 860 288 846 280 C 839.5 262 838.5 247 840 236 C 850 203 877 176 901 166.5 Z" fill="#0f5841" filter="url(#mottle)"/>
<path d="M901 166.5 C 925 176 952 203 964 232 C 967 247 966.5 262 962 280 C 945 288 920 291 903 291 C 886 291 860 288 846 280 C 839.5 262 838.5 247 840 236 C 850 203 877 176 901 166.5 Z" fill="none" stroke="#b4b8b8" stroke-width="2.3" stroke-linejoin="round" opacity="0.92"/>
<text font-family="'Liberation Sans',sans-serif" font-weight="bold" font-size="12.4" fill="#cfd6d0" stroke="#cfd6d0" stroke-width="0.35" letter-spacing="1.35"><textPath href="#arc" startOffset="50%" text-anchor="middle">CALIFORNIA</textPath></text>
<g clip-path="url(#oneclip)"><text x="0" y="0" font-family="'Liberation Sans',sans-serif" font-weight="bold" font-size="75.6" fill="#cdc6c0" transform="translate(882.5 271) scale(0.91 1)">1</text></g>
<circle cx="903.5" cy="282" r="1.2" fill="#5a3a3a"/>
</g>
<!-- TITLE -->
<g font-family="'Liberation Sans',sans-serif" font-weight="bold" font-size="108" stroke-linejoin="round">
<g fill="#38221a" stroke="#38221a" stroke-width="1.6">
<g transform="translate(905 345) scale(0.982) translate(-905 -345)">
<text x="692.5 752.7 829.4 909.4 941.1 1003.6 1036.4" y="382">PACIFIC</text>
<text x="717.6 797.6 880.9 954.5 1024.6" y="481.3">COAST</text>
</g>
<g transform="translate(905 345) scale(0.991) translate(-905 -345)">
<text x="692.5 752.7 829.4 909.4 941.1 1003.6 1036.4" y="382">PACIFIC</text>
<text x="717.6 797.6 880.9 954.5 1024.6" y="481.3">COAST</text>
</g>
</g>
<g filter="url(#speck)" stroke-width="1.6">
<text x="692.5 752.7 829.4 909.4 941.1 1003.6 1036.4" y="382" fill="url(#txt1)" stroke="url(#txt1)">PACIFIC</text>
<text x="717.6 797.6 880.9 954.5 1024.6" y="481.3" fill="url(#txt2)" stroke="url(#txt2)">COAST</text>
</g>
</g>
</svg>
<!--CANVAS-END-->
<!--MISC-START-->
<div class="a" style="left:0;top:0;width:6400px;height:3472px;transform:scale(0.25);transform-origin:0 0">
<div class="a" style="left:1410.00px;top:214.00px;width:3644.00px;height:64.40px;background:linear-gradient(180deg,#383838 0%,#333 50%,#2e2e2e 100%);"></div>
<div class="a" style="left:1410.00px;top:277.60px;width:3644.00px;height:2.40px;background:#191919;"></div>
<div class="a" style="left:1437.20px;top:226.40px;width:38.40px;height:28.80px;background:#3d3d3d;border-radius:4.80px"></div>
<div class="a" style="left:1478.40px;top:226.40px;width:44.80px;height:28.80px;background:#1b1d3e;border-radius:4.80px"></div>
<div class="a" style="left:1416.40px;width:80.00px;text-align:center;top:230.72px;font-size:16.80px;line-height:20.16px;color:#d8d8d8;">&#9635;</div>
<div class="a" style="left:1460.80px;width:80.00px;text-align:center;top:230.72px;font-size:16.80px;line-height:20.16px;color:#3e3ab0;">&#9636;</div>
<div class="a t" style="left:1326.40px;width:240.00px;text-align:center;top:253.60px;color:#dedede;font-weight:bold">Library</div>
<div class="a t" style="left:1390.40px;width:240.00px;text-align:center;top:253.60px;color:#dedede;font-weight:bold">Inspector</div>
<div class="a" style="left:1654.40px;top:226.40px;width:44.00px;height:28.80px;background:#3e3e3e;border-radius:4.80px"></div>
<div class="a" style="left:1636.40px;width:80.00px;text-align:center;top:231.20px;font-size:16.00px;line-height:19.20px;color:#d4d4d4;">&#9776;</div>
<div class="a t" style="left:1558.00px;width:240.00px;text-align:center;top:253.60px;color:#dedede;font-weight:bold">Project Pane</div>
<div class="a" style="left:1775.20px;top:226.40px;width:44.00px;height:28.80px;background:#3e3e3e;border-radius:4.80px"></div>
<div class="a" style="left:1757.20px;width:80.00px;text-align:center;top:230.72px;font-size:16.80px;line-height:20.16px;color:#d4d4d4;">&#10515;</div>
<div class="a t" style="left:1678.40px;width:240.00px;text-align:center;top:253.60px;color:#dedede;font-weight:bold">Import</div>
<div class="a" style="left:3126.40px;top:226.40px;width:64.00px;height:28.80px;background:#3e3e3e;border-radius:4.80px"></div>
<div class="a" style="left:3109.20px;width:80.00px;text-align:center;top:226.96px;font-size:22.40px;line-height:26.88px;color:#e0e0e0;">+</div>
<div class="a" style="left:3136.00px;width:80.00px;text-align:center;top:235.36px;font-size:10.40px;line-height:12.48px;color:#a0a0a0;">&#9662;</div>
<div class="a t" style="left:3036.00px;width:240.00px;text-align:center;top:253.60px;color:#e2e2e2;font-weight:bold">Add Object</div>
<div class="a" style="left:3214.00px;top:226.40px;width:50.00px;height:28.80px;background:#383838;border-radius:4.80px"></div>
<div class="a" style="left:3198.00px;width:80.00px;text-align:center;top:232.16px;font-size:14.40px;line-height:17.28px;color:#b8b8b8;">&#9635;</div>
<div class="a t" style="left:3119.20px;width:240.00px;text-align:center;top:253.60px;color:#484848">Add Mask</div>
<div class="a" style="left:3290.00px;top:226.40px;width:50.00px;height:28.80px;background:#383838;border-radius:4.80px"></div>
<div class="a" style="left:3274.00px;width:80.00px;text-align:center;top:232.16px;font-size:14.40px;line-height:17.28px;color:#b8b8b8;">&#9641;</div>
<div class="a t" style="left:3195.20px;width:240.00px;text-align:center;top:253.60px;color:#484848">Filters</div>
<div class="a" style="left:4704.00px;top:226.40px;width:48.00px;height:28.80px;background:#3a3a3a;border-radius:4.80px"></div>
<div class="a" style="left:4688.00px;width:80.00px;text-align:center;top:232.16px;font-size:14.40px;line-height:17.28px;color:#6a6a6a;">&#10057;</div>
<div class="a t" style="left:4608.00px;width:240.00px;text-align:center;top:253.60px;color:#454545">Make Particles</div>
<div class="a" style="left:4802.00px;top:226.40px;width:49.60px;height:28.80px;background:#3a3a3a;border-radius:4.80px"></div>
<div class="a" style="left:4786.80px;width:80.00px;text-align:center;top:232.16px;font-size:14.40px;line-height:17.28px;color:#6a6a6a;">&#9638;</div>
<div class="a t" style="left:4706.80px;width:240.00px;text-align:center;top:253.60px;color:#454545">Replicate</div>
<div class="a" style="left:4949.60px;top:226.40px;width:40.80px;height:28.80px;background:#404040;border-radius:4.80px"></div>
<div class="a" style="left:4930.00px;width:80.00px;text-align:center;top:230.72px;font-size:16.80px;line-height:20.16px;color:#e0e0e0;">&#9636;</div>
<div class="a t" style="left:4850.00px;width:240.00px;text-align:center;top:253.60px;color:#e0e0e0;font-weight:bold">HUD</div>
<div class="a" style="left:5005.60px;top:226.40px;width:42.40px;height:28.80px;background:#404040;border-radius:4.80px"></div>
<div class="a" style="left:4986.80px;width:80.00px;text-align:center;top:231.84px;font-size:13.60px;line-height:16.32px;color:#e0e0e0;">&#9650;</div>
<div class="a t" style="left:4906.80px;width:240.00px;text-align:center;top:253.60px;color:#e0e0e0;font-weight:bold">Share</div>
<div class="a" style="left:2172.00px;top:280.00px;width:2884.00px;height:33.60px;background:#1f1f1f;"></div>
<div class="a" style="left:2172.00px;top:313.20px;width:2884.00px;height:2.40px;background:#171717;"></div>
<div class="a t" style="right:1630.80px;top:282.40px;text-align:right;color:#d8d8d8;font-weight:bold">Fit: 60%</div>
<div class="a" style="left:4738.40px;width:80.00px;text-align:center;top:289.60px;font-size:12.00px;line-height:14.40px;color:#8a8a8a;">&#8597;</div>
<div class="a" style="left:4808.00px;top:289.60px;width:18.40px;height:14.40px;background:#4a4a4a;border-radius:2.40px"></div>
<div class="a" style="left:4800.00px;width:80.00px;text-align:center;top:291.36px;font-size:10.40px;line-height:12.48px;color:#8a8a8a;">&#9662;</div>
<div class="a t" style="right:1495.20px;top:282.40px;text-align:right;color:#d8d8d8;font-weight:bold">Render</div>
<div class="a" style="left:4874.40px;width:80.00px;text-align:center;top:291.36px;font-size:10.40px;line-height:12.48px;color:#9a9a9a;">&#9662;</div>
<div class="a t" style="right:1427.20px;top:282.40px;text-align:right;color:#d8d8d8;font-weight:bold">View</div>
<div class="a" style="left:4941.60px;width:80.00px;text-align:center;top:291.36px;font-size:10.40px;line-height:12.48px;color:#9a9a9a;">&#9662;</div>
<div class="a" style="left:5004.80px;top:288.80px;width:16.80px;height:16.00px;background:transparent;border:2.00px solid #c8c8c8;border-radius:2.80px;box-sizing:border-box"></div>
<div class="a" style="left:5004.80px;top:293.60px;width:16.80px;height:2.00px;background:#c8c8c8;"></div>
<div class="a" style="left:4993.20px;width:80.00px;text-align:center;top:289.60px;font-size:12.00px;line-height:14.40px;color:#8a8a8a;">&#8597;</div>
<div class="a" style="left:4933.60px;top:325.20px;width:110.40px;height:22.80px;background:transparent;border:1.80px solid #6c6c6c;border-radius:3.20px;box-sizing:border-box"></div>
<div class="a" style="left:4961.20px;top:325.20px;width:1.80px;height:22.80px;background:#6c6c6c;"></div>
<div class="a" style="left:4988.80px;top:325.20px;width:1.80px;height:22.80px;background:#6c6c6c;"></div>
<div class="a" style="left:5016.40px;top:325.20px;width:1.80px;height:22.80px;background:#6c6c6c;"></div>
<div class="a" style="left:4907.60px;width:80.00px;text-align:center;top:329.12px;font-size:12.80px;line-height:15.36px;color:#cfcfcf;">&#10530;</div>
<div class="a" style="left:4935.20px;width:80.00px;text-align:center;top:329.12px;font-size:12.80px;line-height:15.36px;color:#9a9a9a;">&#9707;</div>
<div class="a" style="left:4962.80px;width:80.00px;text-align:center;top:329.12px;font-size:12.80px;line-height:15.36px;color:#7a7a7a;">&#9638;</div>
<div class="a" style="left:4990.00px;width:80.00px;text-align:center;top:329.12px;font-size:12.80px;line-height:15.36px;color:#9a9a9a;">&#8630;</div>
<div class="a" style="left:2180.80px;top:325.20px;width:134.40px;height:22.80px;background:#1c1c1c;border:1.80px solid #8c8c8c;border-radius:3.20px;box-sizing:border-box"></div>
<div class="a t" style="left:2187.20px;top:322.40px;color:#f0f0f0;font-weight:bold">Active Camera</div>
<div class="a" style="left:2264.00px;width:80.00px;text-align:center;top:331.36px;font-size:10.40px;line-height:12.48px;color:#c8c8c8;">&#9662;</div>
<div class="a" style="left:2172.00px;top:2020.00px;width:2884.00px;height:130.00px;background:#1d1d1d;"></div>
<svg class="a" style="left:2212.00px;top:2024.00px" width="88.00" height="80.00" viewBox="553 506 22 20"><path d="M558.1 520.6 V510.6" stroke="#3f9a3c" stroke-width="0.7"/><path d="M558.1 508.4 L559.3 511 L556.9 511 Z" fill="#48b044"/><path d="M559.8 522.2 H569" stroke="#b43a2c" stroke-width="0.7"/><path d="M571.4 522.2 L568.8 523.4 L568.8 521 Z" fill="#c8402e"/><circle cx="558.1" cy="522.2" r="1.7" fill="#4448b8"/></svg>
<div class="a" style="left:2172.00px;top:2149.60px;width:2884.00px;height:17.60px;background:#181716;"></div>
<div class="a" style="left:2157.60px;width:80.00px;text-align:center;top:2151.36px;font-size:10.40px;line-height:12.48px;color:#d8d8d8;">&#9664;</div>
<div class="a" style="left:4984.80px;width:80.00px;text-align:center;top:2151.36px;font-size:10.40px;line-height:12.48px;color:#d8d8d8;">&#9654;</div>
<div class="a" style="left:2861.20px;top:2154.40px;width:2.40px;height:12.80px;background:#d8d8d8;"></div>
<div class="a" style="left:2858.40px;top:2150.40px;width:8.00px;height:6.40px;background:transparent;border:1.60px solid #d8d8d8;border-radius:50%;box-sizing:border-box"></div>
<div class="a" style="left:2202.40px;top:2167.60px;width:2817.60px;height:21.60px;background:linear-gradient(180deg,#27426f 0%,#1c3359 30%,#1a3058 100%);"></div>
<div class="a" style="left:2172.00px;top:2189.60px;width:2884.00px;height:4.00px;background:#0e0e12;"></div>
<div class="a t" style="left:2212.00px;top:2164.00px;color:#8ea6d2">PACIFIC</div>
<div class="a" style="left:5021.60px;top:2167.20px;width:34.40px;height:22.40px;background:#111;"></div>
<div class="a" style="left:2172.00px;top:2193.60px;width:2884.00px;height:33.20px;background:#1c1c1c;"></div>
<svg class="a" style="left:2192.00px;top:2196.80px" width="16.00" height="20.80" viewBox="0 0 8 10"><path d="M1 0 L7 6 L4 6.2 L5.6 9.4 L4.4 10 L2.9 6.8 L1 8.6 Z" fill="#4d49c8"/></svg>
<div class="a" style="left:2180.00px;width:80.00px;text-align:center;top:2202.24px;font-size:9.60px;line-height:11.52px;color:#8a8a8a;">&#9662;</div>
<div class="a" style="left:2255.20px;top:2199.20px;width:18.40px;height:18.40px;background:transparent;border:3.60px solid #e4e4e4;border-radius:50%;box-sizing:border-box"></div>
<div class="a" style="left:2266.40px;top:2197.60px;width:5.60px;height:5.60px;background:#1c1c1c;"></div>
<div class="a" style="left:2304.80px;top:2200.00px;width:16.00px;height:16.80px;background:#ececec;border-radius:50% 50% 40% 40%"></div>
<div class="a" style="left:2293.60px;width:80.00px;text-align:center;top:2202.24px;font-size:9.60px;line-height:11.52px;color:#c8c8c8;">&#9662;</div>
<div class="a" style="left:3486.40px;top:2201.60px;width:18.40px;height:14.40px;background:#dcdcdc;border-radius:1.60px"></div>
<div class="a" style="left:3476.80px;width:80.00px;text-align:center;top:2203.04px;font-size:9.60px;line-height:11.52px;color:#9a9a9a;">&#9662;</div>
<svg class="a" style="left:3534.40px;top:2198.40px" width="19.20" height="19.20" viewBox="0 0 10 10"><path d="M5 0.5 L7.6 6 L6.2 9.5 H3.8 L2.4 6 Z" fill="none" stroke="#dcdcdc" stroke-width="1.3"/><path d="M5 3 V6" stroke="#dcdcdc" stroke-width="1"/></svg>
<div class="a" style="left:3526.40px;width:80.00px;text-align:center;top:2203.04px;font-size:9.60px;line-height:11.52px;color:#9a9a9a;">&#9662;</div>
<svg class="a" style="left:3602.00px;top:2197.60px" width="20.00" height="20.00" viewBox="0 0 10 10"><path d="M1 9 L9 1" stroke="#dcdcdc" stroke-width="1.6"/></svg>
<div class="a" style="left:3649.60px;top:2194.40px;font-size:22.40px;line-height:28.00px;font-weight:bold;font-family:'Liberation Serif',serif;color:#e4e4e4">T</div>
<div class="a" style="left:3636.80px;width:80.00px;text-align:center;top:2203.04px;font-size:9.60px;line-height:11.52px;color:#9a9a9a;">&#9662;</div>
<div class="a" style="left:3705.60px;top:2201.60px;width:19.20px;height:14.40px;background:transparent;border:2.40px solid #bdbdbd;border-radius:2.00px;box-sizing:border-box"></div>
<div class="a" style="left:3712.00px;top:2206.40px;width:6.40px;height:4.80px;background:#bdbdbd;"></div>
<div class="a" style="left:3698.40px;width:80.00px;text-align:center;top:2203.04px;font-size:9.60px;line-height:11.52px;color:#9a9a9a;">&#9662;</div>
<svg class="a" style="left:5014.40px;top:2196.80px" width="24.00" height="24.00" viewBox="0 0 12 12"><path d="M1 1 L5 1 L1 5 Z M11 11 L7 11 L11 7 Z" fill="#bdbdbd"/><path d="M2 2 L10 10" stroke="#bdbdbd" stroke-width="1.2"/></svg>
<div class="a" style="left:2172.00px;top:2227.20px;width:2884.00px;height:36.80px;background:linear-gradient(180deg,#3b3b3b 0%,#363636 100%);"></div>
<div class="a" style="left:2162.40px;width:80.00px;text-align:center;top:2234.72px;font-size:16.80px;line-height:20.16px;color:#e2e2e2;">&#8676;</div>
<div class="a" style="left:2244.00px;top:2237.60px;width:17.60px;height:15.20px;background:#3a427a;border-radius:6.40px"></div>
<div class="a" style="left:2296.80px;top:2237.60px;width:20.80px;height:15.20px;background:#8a2a3a;border-radius:6.40px"></div>
<div class="a" style="left:3429.20px;width:80.00px;text-align:center;top:2237.84px;font-size:11.60px;line-height:13.92px;color:#e2e2e2;">&#9664;</div>
<div class="a" style="left:3460.80px;top:2239.20px;width:2.00px;height:11.20px;background:#e2e2e2;"></div>
<div class="a" style="left:3469.20px;width:80.00px;text-align:center;top:2236.64px;font-size:13.60px;line-height:16.32px;color:#f0f0f0;">&#9654;</div>
<div class="a" style="left:3574.00px;top:2230.40px;font-size:24.80px;line-height:29.60px;color:#6e6e6e;letter-spacing:0.40px;white-space:nowrap"><span style="color:#585858">00:00:</span><span style="color:#8a8a8a">71</span></div>
<div class="a" style="left:3692.80px;width:80.00px;text-align:center;top:2238.96px;font-size:10.40px;line-height:12.48px;color:#9a9a9a;">&#9662;</div>
<div class="a" style="left:3738.00px;width:80.00px;text-align:center;top:2236.16px;font-size:14.40px;line-height:17.28px;color:#5a5a5a;">&#8635;</div>
<div class="a" style="left:4921.60px;top:2236.80px;width:16.80px;height:16.80px;background:#d8d8d8;border-radius:2.00px"></div>
<div class="a" style="left:4927.60px;top:2239.60px;width:4.80px;height:11.20px;background:#3a3a3a;"></div>
<div class="a" style="left:4934.40px;width:80.00px;text-align:center;top:2237.12px;font-size:12.80px;line-height:15.36px;color:#b4b4b4;">&#9664;</div>
<div class="a" style="left:4965.60px;top:2240.80px;width:5.60px;height:8.00px;background:#b4b4b4;"></div>
<div class="a t" style="left:5002.00px;top:2230.40px;color:#8a8a8a;font-weight:bold">((&#8226;))</div>
</div>
<!--MISC-END-->
</div></div>
<div class="a" id="stand">
<svg width="234" height="235" viewBox="0 0 234 235" style="display:block">
<defs>
<linearGradient id="stv" x1="0" y1="0" x2="0" y2="1">
<stop offset="0" stop-color="#5c5c5c"/>
<stop offset="0.05" stop-color="#787878"/>
<stop offset="0.18" stop-color="#9c9c9d"/>
<stop offset="0.36" stop-color="#b7b8b9"/>
<stop offset="0.6" stop-color="#adaeaf"/>
<stop offset="0.85" stop-color="#a3a5a7"/>
<stop offset="0.95" stop-color="#9c9ea0"/>
<stop offset="1" stop-color="#b2b4b6"/>
</linearGradient>
<linearGradient id="sth" x1="0" y1="0" x2="1" y2="0">
<stop offset="0" stop-color="#000" stop-opacity="0.2"/>
<stop offset="0.12" stop-color="#000" stop-opacity="0.07"/>
<stop offset="0.5" stop-color="#fff" stop-opacity="0.05"/>
<stop offset="0.88" stop-color="#000" stop-opacity="0.07"/>
<stop offset="1" stop-color="#000" stop-opacity="0.2"/>
</linearGradient>
<linearGradient id="lip" x1="0" y1="0" x2="0" y2="1">
<stop offset="0" stop-color="#b2b4b6"/>
<stop offset="0.5" stop-color="#cccdce"/>
<stop offset="0.85" stop-color="#b4b5b6"/>
<stop offset="1" stop-color="#7c7c7c"/>
</linearGradient>
<linearGradient id="foot" x1="0" y1="0" x2="1" y2="0">
<stop offset="0" stop-color="#5a5a5a"/>
<stop offset="0.035" stop-color="#bcbcbc"/>
<stop offset="0.06" stop-color="#cfcfcf"/>
<stop offset="0.11" stop-color="#a8aaac"/>
<stop offset="0.89" stop-color="#a8aaac"/>
<stop offset="0.94" stop-color="#cfcfcf"/>
<stop offset="0.965" stop-color="#bcbcbc"/>
<stop offset="1" stop-color="#5a5a5a"/>
</linearGradient>
</defs>
<rect x="0" y="0" width="234" height="212" fill="url(#stv)"/>
<rect x="0" y="0" width="234" height="212" fill="url(#sth)"/>
<rect x="0" y="211.5" width="234" height="10" fill="url(#lip)"/>
<path d="M0.6 221.5 H233.4 V230 Q233.4 234 229 234 H5 Q0.6 234 0.6 230 Z" fill="url(#foot)"/>
</svg>
</div>
<div class="a" id="badge"></div>
<svg class="a" style="left:1310px;top:789px" width="290" height="79" viewBox="1310 789 290 79" font-family="'Liberation Serif',serif" font-style="italic" font-weight="bold" stroke-linejoin="round">
<text x="1341" y="841.3" font-size="46.5" fill="#0e3b76" stroke="#0e3b76" stroke-width="1" textLength="66" lengthAdjust="spacingAndGlyphs">App</text>
<text x="1419" y="853.5" font-size="72" fill="#ffffff" stroke="#ffffff" stroke-width="1" textLength="31" lengthAdjust="spacingAndGlyphs">4</text>
<text x="1466" y="841.3" font-size="46.5" fill="#0e3b76" stroke="#0e3b76" stroke-width="1" textLength="102" lengthAdjust="spacingAndGlyphs">Phone</text>
</svg>
</body>
</html>
